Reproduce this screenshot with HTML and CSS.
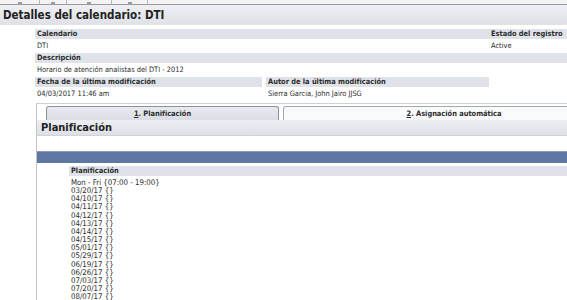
FILE: index.html
```html
<!DOCTYPE html>
<html lang="es">
<head>
<meta charset="utf-8">
<title>Detalles del calendario: DTI</title>
<link rel="stylesheet" href="styles.css">
</head>
<body>
<div class="page">
  <div class="toolbar">
    <span class="tb tb1"><i></i></span>
    <span class="tb tb2"><i></i></span>
    <span class="tb tb3"><i></i></span>
    <span class="tb tb4"><i></i></span>
  </div>
  <div class="titlebar">Detalles del calendario: DTI</div>
  <div class="details">
    <div class="lbl span2">Calendario</div>
    <div class="lbl">Estado del registro</div>
    <div class="val span2">DTI</div>
    <div class="val">Active</div>
    <div class="lbl span3">Descripción</div>
    <div class="val span3">Horario de atención analistas del DTI - 2012</div>
    <div class="lbl gapr">Fecha de la última modificación</div>
    <div class="lbl">Autor de la última modificación</div>
    <div class="blank"></div>
    <div class="val">04/03/2017 11:46 am</div>
    <div class="val">Sierra Garcia, John Jairo JJSG</div>
    <div class="blank"></div>
  </div>
  <div class="tabbox">
    <div class="tabs">
      <div class="tab tab-active"><u>1</u>. Planificación</div>
      <div class="tab tab-other"><u>2</u>. Asignación automática</div>
    </div>
    <div class="panel-head">Planificación</div>
    <div class="panel-gap"></div>
    <div class="bluebar"></div>
    <div class="sched">
      <div class="sched-lbl">Planificación</div>
      <div class="sched-list">
        <div>Mon - Fri {07:00 - 19:00}</div>
        <div>03/20/17 {}</div>
        <div>04/10/17 {}</div>
        <div>04/11/17 {}</div>
        <div>04/12/17 {}</div>
        <div>04/13/17 {}</div>
        <div>04/14/17 {}</div>
        <div>04/15/17 {}</div>
        <div>05/01/17 {}</div>
        <div>05/29/17 {}</div>
        <div>06/19/17 {}</div>
        <div>06/26/17 {}</div>
        <div>07/03/17 {}</div>
        <div>07/20/17 {}</div>
        <div>08/07/17 {}</div>
      </div>
    </div>
  </div>
</div>
</body>
</html>
```

FILE: styles.css
```css
html, body {
  margin: 0;
  padding: 0;
  background: #ffffff;
  overflow: hidden;
}
.page {
  width: 660px;
  font-family: "DejaVu Sans Condensed", "Liberation Sans", sans-serif;
  font-size: 7.4px;
  color: #2b2b2b;
}
.toolbar {
  display: flex;
  height: 4px;
  background: #f3f3f3;
  border-bottom: 1px solid #9a9a9a;
}
.tb {
  display: flex;
  justify-content: center;
  align-items: flex-end;
  border-right: 1px solid #b8b8b8;
}
.tb i {
  display: block;
  width: 4px;
  height: 2px;
  background: #9c9c9c;
}
.tb1 { width: 39px; }
.tb2 { width: 26px; }
.tb3 { width: 44px; }
.tb4 { width: 35px; }
.titlebar {
  height: 20px;
  line-height: 20px;
  padding-left: 3px;
  font-size: 11.5px;
  font-weight: bold;
  color: #222;
  background: linear-gradient(#eeeff2, #dfe1e7);
}
.details {
  display: grid;
  grid-template-columns: 231px 223px 1fr;
  margin-left: 35px;
  padding-top: 4px;
}
.span2 { grid-column: span 2; }
.span3 { grid-column: span 3; }
.lbl {
  height: 10px;
  line-height: 10px;
  padding-left: 2px;
  font-weight: bold;
  background: #dfe2e9;
  white-space: nowrap;
}
.gapr { margin-right: 4px; }
.val {
  height: 14px;
  line-height: 14px;
  padding-left: 2px;
  white-space: nowrap;
}
.tabbox {
  margin-top: 2px;
  margin-left: 36px;
  border-top: 1px solid #d0d0d0;
  border-left: 1px solid #c4c4c4;
  height: 200px;
}
.tabs {
  display: flex;
  gap: 4px;
  padding: 2px 0 0 9px;
}
.tab {
  height: 13px;
  line-height: 13px;
  text-align: center;
  font-weight: bold;
  border: 1px solid #8c9099;
  border-bottom: none;
  border-radius: 3px 3px 0 0;
}
.tab-active {
  width: 231px;
  background: linear-gradient(#e8eaef, #dadde5);
}
.tab-other {
  width: 340px;
  background: #f9fafb;
  border-color: #a4a8b0;
}
.panel-head {
  height: 15px;
  line-height: 15px;
  padding-left: 4px;
  font-size: 11px;
  font-weight: bold;
  color: #222;
  background: linear-gradient(#eceef2, #dde0e6);
  border-bottom: 1px solid #cfd2d8;
}
.panel-gap { height: 15px; }
.bluebar {
  height: 11px;
  background: #5f78a3;
  border-top: 1px solid #8b9bbb;
}
.sched {
  padding: 3px 0 0 32px;
}
.sched-lbl {
  height: 10px;
  line-height: 10px;
  padding-left: 2px;
  font-weight: bold;
  background: #dfe2e9;
}
.sched-list {
  padding: 3px 0 0 2px;
  font-size: 7.8px;
  line-height: 8.15px;
}
```
